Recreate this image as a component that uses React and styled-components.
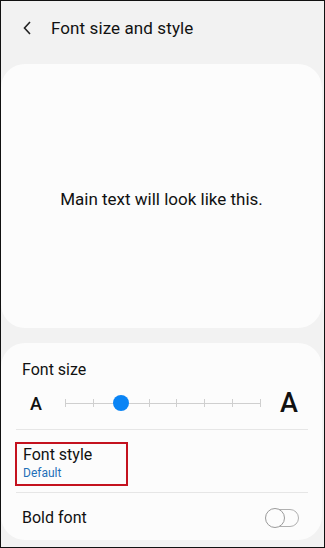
import React from 'react';
import styled, { createGlobalStyle } from 'styled-components';

const GlobalStyle = createGlobalStyle`
	html, body {
		margin: 0;
		padding: 0;
		background: #f2f2f2;
	}
	* {
		box-sizing: border-box;
	}
`;

const Screen = styled.div`
	width: 325px;
	height: 548px;
	border: 1px solid #111;
	background: #f2f2f2;
	font-family: Roboto, 'Noto Sans', sans-serif;
	color: #111;
	display: flex;
	flex-direction: column;
	overflow: hidden;
`;

const Header = styled.div`
	height: 63px;
	display: flex;
	align-items: center;
	padding: 0 0 10px 21px;
	gap: 17px;
`;

const Title = styled.div`
	font-size: 17px;
	letter-spacing: 0.1px;
`;

const Card = styled.div`
	background: #fcfcfc;
	border-radius: 24px;
	margin: 0 2px 0 0;
`;

const Preview = styled(Card)`
	height: 264px;
	display: flex;
	align-items: center;
	justify-content: center;
	font-size: 17px;
	padding-top: 6px;
`;

const Settings = styled(Card)`
	margin-top: 15px;
	height: 197px;
	padding: 0 14px 0 15px;
	display: flex;
	flex-direction: column;
`;

const Block = styled.div`
	padding: 17px 6px 0 6px;
	border-bottom: 1px solid #e6e6e6;
	height: ${p => p.h}px;
`;

const Label = styled.div`
	font-size: 16px;
	line-height: 20px;
`;

const SliderRow = styled.div`
	display: flex;
	align-items: center;
	margin-top: 9px;
`;

const SmallA = styled.span`
	font-size: 18px;
	font-weight: 500;
	width: 43px;
	padding-left: 8px;
`;

const BigA = styled.span`
	font-size: 27px;
	font-weight: 500;
	margin-left: 19px;
	line-height: 28px;
`;

const Track = styled.div`
	position: relative;
	width: 196px;
	height: 12px;
	display: flex;
	align-items: center;
`;

const Line = styled.div`
	width: 100%;
	height: 1px;
	background: #cfcfcf;
`;

const Tick = styled.div`
	position: absolute;
	top: 2px;
	width: 1px;
	height: 8px;
	background: #cfcfcf;
`;

const Thumb = styled.div`
	position: absolute;
	top: -2px;
	width: 16px;
	height: 16px;
	margin-left: -8px;
	border-radius: 50%;
	background: #0a84f5;
`;

const StyleBox = styled.div`
	margin: 12px 0 0 -7px;
	width: 113px;
	height: 44px;
	border: 2px solid #c4121f;
	padding: 1px 0 0 6px;
`;

const Sub = styled.div`
	font-size: 12px;
	color: #1f6fb8;
	line-height: 16px;
`;

const ToggleRow = styled.div`
	display: flex;
	align-items: center;
	justify-content: space-between;
	padding: 15px 9px 0 6px;
`;

const Toggle = styled.div`
	position: relative;
	width: 33px;
	height: 18px;
	border: 1.5px solid #b0b0b0;
	border-radius: 9px;
`;

const Knob = styled.div`
	position: absolute;
	left: -2px;
	top: -2.5px;
	width: 20px;
	height: 20px;
	border-radius: 50%;
	border: 1.5px solid #9a9a9a;
	background: #fcfcfc;
`;

const Back = () => (
	<svg width="12" height="16" viewBox="0 0 12 16">
		<path d="M8 2 L2.5 8 L8 14" fill="none" stroke="#222" strokeWidth="1.6" />
	</svg>
);

const steps = 8;
const current = 2;

const App = () => (
	<>
		<GlobalStyle />
		<Screen>
			<Header>
				<Back />
				<Title>Font size and style</Title>
			</Header>
			<Preview>Main text will look like this.</Preview>
			<Settings>
				<Block h={87}>
					<Label>Font size</Label>
					<SliderRow>
						<SmallA>A</SmallA>
						<Track>
							<Line />
							{Array.from({ length: steps }).map((_, i) => (
								<Tick key={i} style={{ left: `${(i * 195) / (steps - 1)}px` }} />
							))}
							<Thumb style={{ left: `${(current * 195) / (steps - 1)}px` }} />
						</Track>
						<BigA>A</BigA>
					</SliderRow>
				</Block>
				<Block h={63} style={{ paddingTop: 0 }}>
					<StyleBox>
						<Label>Font style</Label>
						<Sub>Default</Sub>
					</StyleBox>
				</Block>
				<ToggleRow>
					<Label>Bold font</Label>
					<Toggle>
						<Knob />
					</Toggle>
				</ToggleRow>
			</Settings>
		</Screen>
	</>
);

export default App;
